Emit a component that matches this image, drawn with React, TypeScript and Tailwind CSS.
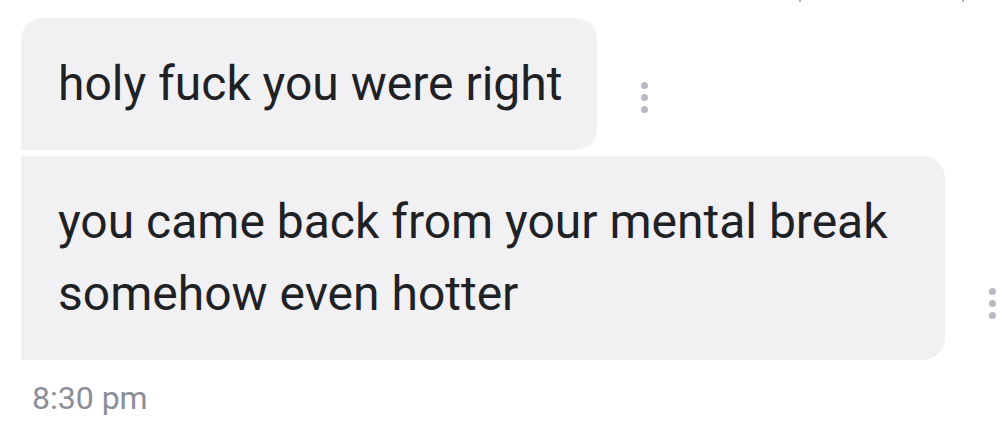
const Dots = () => (
  <div className="flex flex-col items-center gap-[5px]">
    <span className="h-[7px] w-[7px] rounded-full bg-[#b9b9c4]" />
    <span className="h-[7px] w-[7px] rounded-full bg-[#b9b9c4]" />
    <span className="h-[7px] w-[7px] rounded-full bg-[#b9b9c4]" />
  </div>
);

const App = () => {
  return (
    <div
      className="relative h-[436px] w-[1002px] overflow-hidden bg-white text-[#202124]"
      style={{ fontFamily: "Roboto, 'Noto Sans', sans-serif" }}
    >
      <span className="absolute left-[799px] top-0 h-[2px] w-[2px] rounded-full bg-[#9a9aa2]" />
      <span className="absolute left-[962px] top-0 h-[2px] w-[2px] rounded-full bg-[#9a9aa2]" />

      <div className="flex flex-col pl-[21px] pt-[18px]">
        <div className="flex items-center">
          <div className="flex h-[132px] w-[576px] items-center rounded-t-[22px] rounded-br-[22px] bg-[#f1f1f4] pl-[37px]">
            <p className="text-[48px] leading-none">holy fuck you were right</p>
          </div>
          <div className="ml-[44px] mt-[26px]">
            <Dots />
          </div>
        </div>

        <div className="mt-[6px] flex items-center">
          <div className="flex h-[204px] w-[924px] flex-col justify-center rounded-r-[22px] bg-[#f1f1f4] pl-[37px]">
            <p className="text-[48px] leading-[72px]">you came back from your mental break</p>
            <p className="text-[48px] leading-[72px]">somehow even hotter</p>
          </div>
          <div className="ml-[44px] mt-[90px]">
            <Dots />
          </div>
        </div>

        <p className="mt-[22px] pl-[11px] text-[32px] leading-none text-[#8b8e98]">8:30 pm</p>
      </div>
    </div>
  );
};

export default App;
